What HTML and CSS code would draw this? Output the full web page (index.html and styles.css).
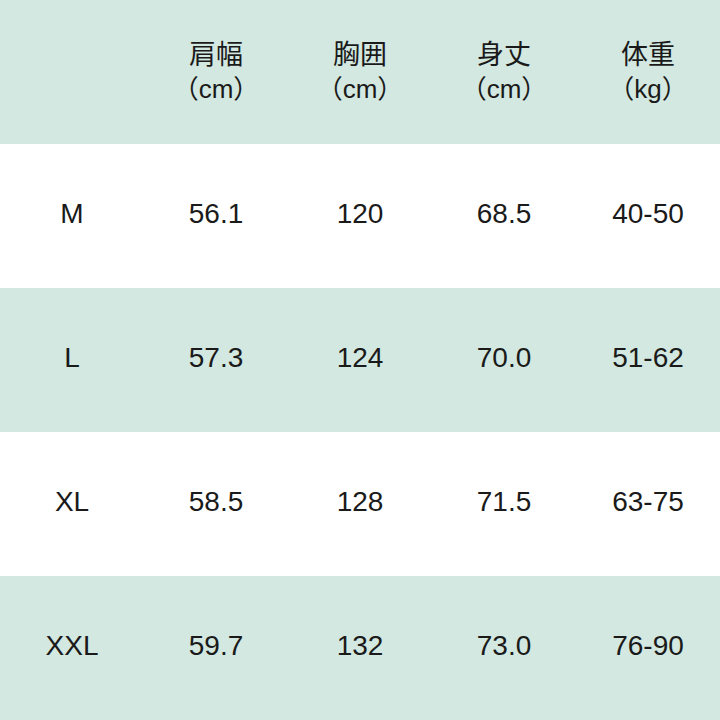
FILE: index.html
```html
<!DOCTYPE html>
<html>
<head>
<meta charset="utf-8">
<link rel="stylesheet" href="styles.css">
</head>
<body>
<div class="table">
  <div class="row green head">
    <div class="cell"></div>
    <div class="cell"><span>肩幅</span><span>（cm）</span></div>
    <div class="cell"><span>胸囲</span><span>（cm）</span></div>
    <div class="cell"><span>身丈</span><span>（cm）</span></div>
    <div class="cell"><span>体重</span><span>（kg）</span></div>
  </div>
  <div class="row">
    <div class="cell">M</div><div class="cell">56.1</div><div class="cell">120</div><div class="cell">68.5</div><div class="cell">40-50</div>
  </div>
  <div class="row green">
    <div class="cell">L</div><div class="cell">57.3</div><div class="cell">124</div><div class="cell">70.0</div><div class="cell">51-62</div>
  </div>
  <div class="row">
    <div class="cell">XL</div><div class="cell">58.5</div><div class="cell">128</div><div class="cell">71.5</div><div class="cell">63-75</div>
  </div>
  <div class="row green">
    <div class="cell">XXL</div><div class="cell">59.7</div><div class="cell">132</div><div class="cell">73.0</div><div class="cell">76-90</div>
  </div>
</div>
</body>
</html>
```
FILE: styles.css
```css
html, body {
  margin: 0;
  padding: 0;
  background: #ffffff;
}
.table {
  width: 720px;
  display: flex;
  flex-direction: column;
  font-family: "Liberation Sans", Arial, "Noto Sans CJK JP", sans-serif;
  color: #1a1a1a;
}
.row {
  display: grid;
  grid-template-columns: repeat(5, 144px);
  height: 144px;
}
.row.green {
  background: #d2e8e0;
}
.cell {
  display: flex;
  flex-direction: column;
  align-items: center;
  justify-content: center;
  font-size: 28px;
  padding-bottom: 4px;
}
.head .cell {
  font-family: "Noto Sans CJK JP", sans-serif;
  font-size: 27px;
  line-height: 36px;
  padding-bottom: 2px;
}
.head .cell span:last-child {
  font-family: "Liberation Sans", "Noto Sans CJK JP", sans-serif;
  font-size: 26px;
}
```
